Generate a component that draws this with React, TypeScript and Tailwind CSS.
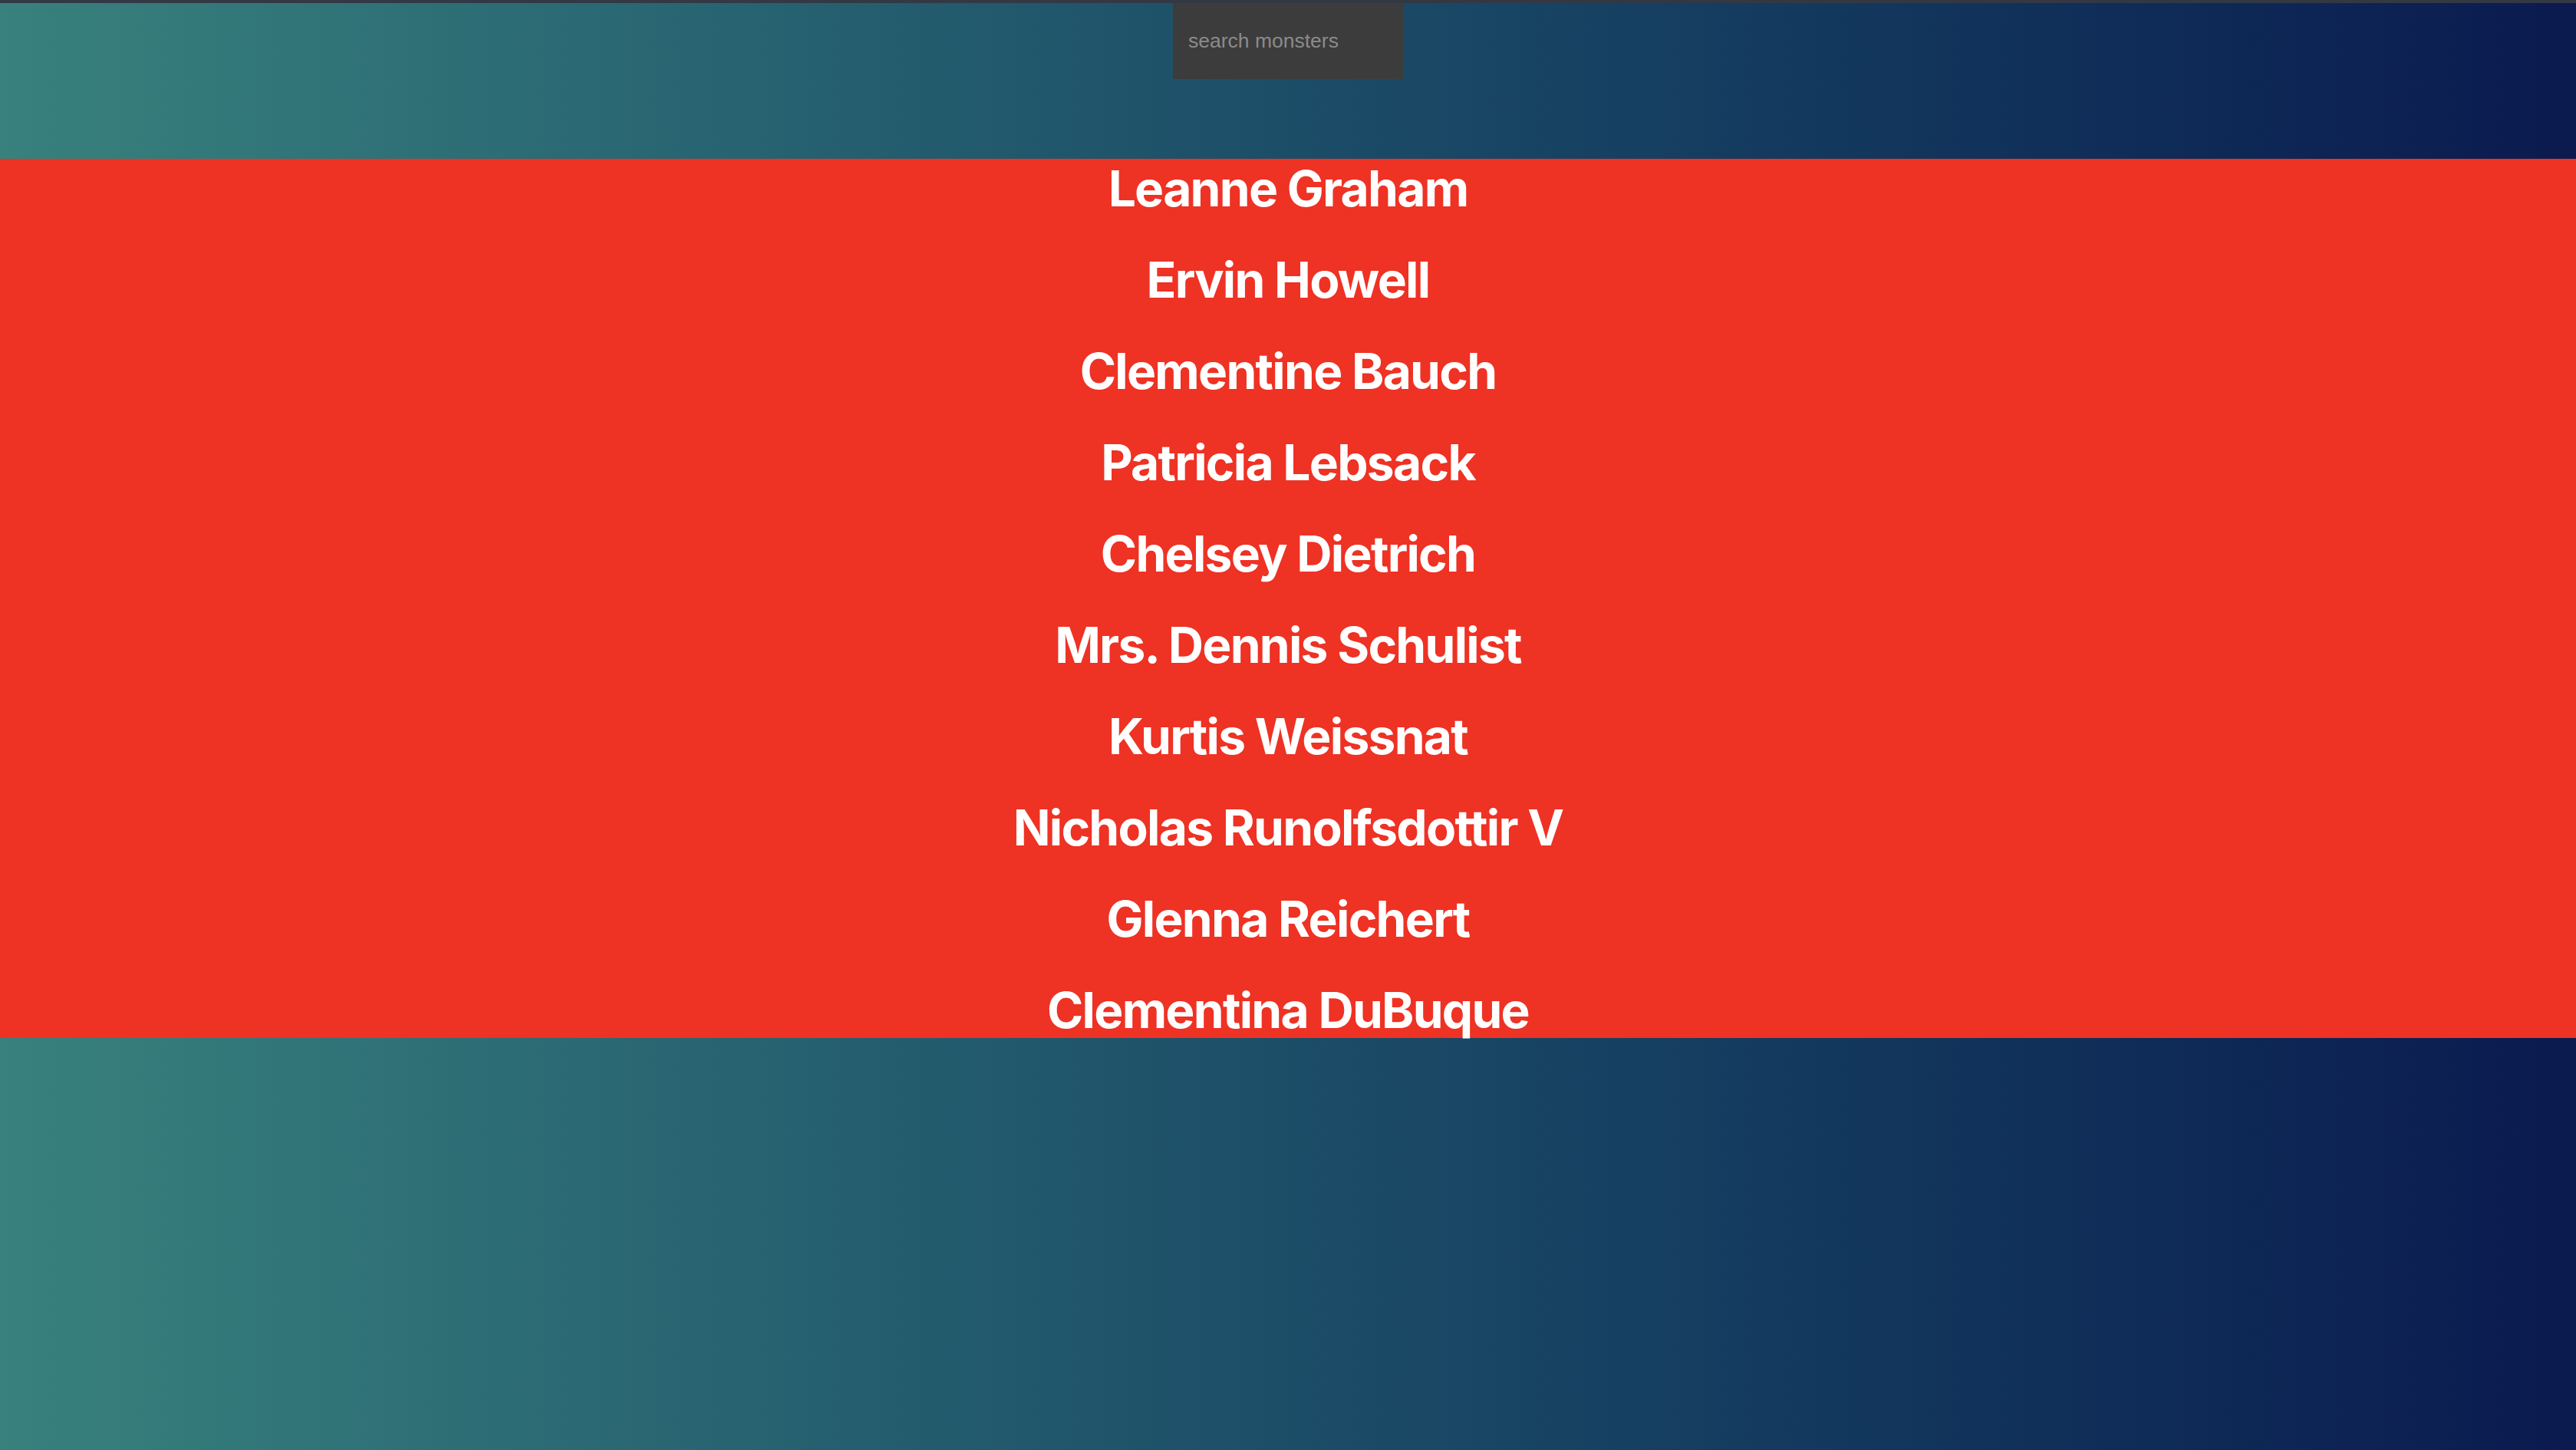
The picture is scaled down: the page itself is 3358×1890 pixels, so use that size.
import React, { useState } from 'react';

const MONSTERS = [
  'Leanne Graham',
  'Ervin Howell',
  'Clementine Bauch',
  'Patricia Lebsack',
  'Chelsey Dietrich',
  'Mrs. Dennis Schulist',
  'Kurtis Weissnat',
  'Nicholas Runolfsdottir V',
  'Glenna Reichert',
  'Clementina DuBuque',
];

export default function App() {
  const [search, setSearch] = useState('');
  const filtered = MONSTERS.filter((m) => m.toLowerCase().includes(search.toLowerCase()));

  return (
    <div className="min-h-screen w-full border-t-4 border-[#333845] bg-gradient-to-r from-[#38817d] to-[#0b1a4f]">
      <div className="flex justify-center">
        <input
          type="search"
          value={search}
          onChange={(e) => setSearch(e.target.value)}
          placeholder="search monsters"
          className="h-[99px] w-[300px] bg-[#3c3c3c] px-5 text-[26.5px] text-white outline-none placeholder:text-[#8b8b8b] font-['Liberation_Sans',Arial,sans-serif]"
        />
      </div>

      <ul className="mt-[104px] flex h-[1146px] flex-col items-center gap-[55px] bg-[#ee3224] pt-[7px] font-['Inter',sans-serif]">
        {filtered.map((name) => (
          <li key={name} className="text-[64px] leading-[64px] font-bold tracking-[-1.7px] text-white">
            {name}
          </li>
        ))}
      </ul>
    </div>
  );
}
